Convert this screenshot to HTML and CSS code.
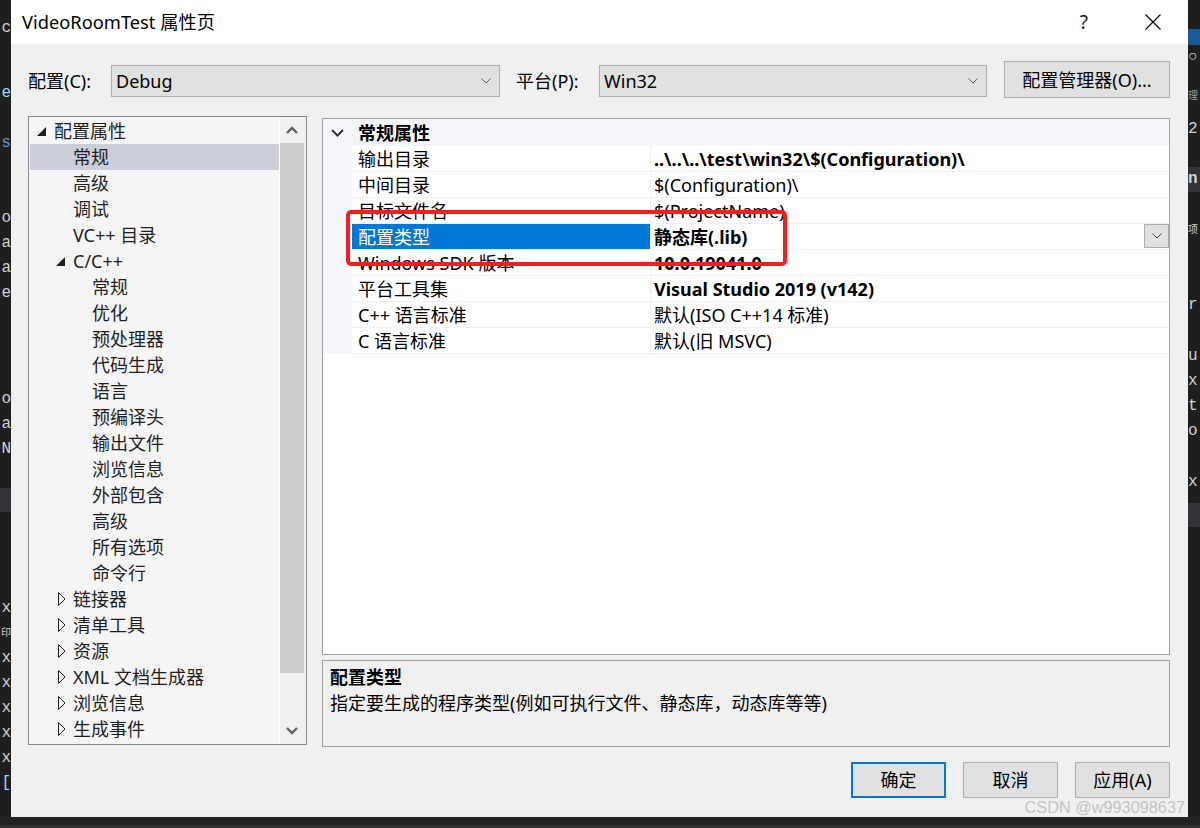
FILE: index.html
```html
<!DOCTYPE html>
<html lang="zh-CN">
<head>
<meta charset="utf-8">
<title>VideoRoomTest 属性页</title>
<link rel="stylesheet" href="styles.css">
</head>
<body>
<div class="desk">
  <div class="strip strip-left">
    <div class="sp16"></div>
    <div class="ln c-w">c</div>
    <div class="sp40"></div>
    <div class="ln c-lb">e</div>
    <div class="sp25"></div>
    <div class="ln c-b">s</div>
    <div class="sp50"></div>
    <div class="ln c-w">o</div>
    <div class="ln c-w">a</div>
    <div class="ln c-w">a</div>
    <div class="ln c-w">e</div>
    <div class="sp81"></div>
    <div class="ln c-w">o</div>
    <div class="ln c-w">a</div>
    <div class="ln c-w">N</div>
    <div class="sp26"></div>
    <div class="band"></div>
    <div class="sp84"></div>
    <div class="ln c-w">x</div>
    <div class="ln c-w sm">印</div>
    <div class="ln c-w">x</div>
    <div class="ln c-w">x</div>
    <div class="ln c-w">x</div>
    <div class="ln c-w">x</div>
    <div class="ln c-w">x</div>
    <div class="ln c-lb">[</div>
  </div>

  <div class="dialog">
    <div class="titlebar">
      <span class="title">VideoRoomTest 属性页</span>
      <span class="help">?</span>
      <svg class="close" width="16" height="16" viewBox="0 0 16 16"><path d="M0.5 0.5 L15.5 15.5 M15.5 0.5 L0.5 15.5" stroke="#000" stroke-width="1.1" fill="none"/></svg>
    </div>

    <div class="content">
      <div class="config-row">
        <span class="lbl">配置(C):</span>
        <div class="select sel-config">
          <span>Debug</span>
          <svg width="10" height="6" viewBox="0 0 10 6"><polyline points="0.5,0.5 5,5 9.5,0.5" stroke="#606060" stroke-width="1" fill="none"/></svg>
        </div>
        <span class="lbl lbl-plat">平台(P):</span>
        <div class="select sel-plat">
          <span>Win32</span>
          <svg width="10" height="6" viewBox="0 0 10 6"><polyline points="0.5,0.5 5,5 9.5,0.5" stroke="#606060" stroke-width="1" fill="none"/></svg>
        </div>
        <button class="btn btn-mgr">配置管理器(O)...</button>
      </div>

      <div class="main">
        <div class="tree">
          <div class="tree-list">
            <div class="row l0"><span class="arw"><svg width="9" height="9" viewBox="0 0 9 9"><polygon points="9,0 9,9 0,9" fill="#1e1e1e"/></svg></span>配置属性</div>
            <div class="row l1 sel"><span class="arw"></span>常规</div>
            <div class="row l1"><span class="arw"></span>高级</div>
            <div class="row l1"><span class="arw"></span>调试</div>
            <div class="row l1"><span class="arw"></span>VC++ 目录</div>
            <div class="row l1"><span class="arw"><svg width="9" height="9" viewBox="0 0 9 9"><polygon points="9,0 9,9 0,9" fill="#1e1e1e"/></svg></span>C/C++</div>
            <div class="row l2"><span class="arw"></span>常规</div>
            <div class="row l2"><span class="arw"></span>优化</div>
            <div class="row l2"><span class="arw"></span>预处理器</div>
            <div class="row l2"><span class="arw"></span>代码生成</div>
            <div class="row l2"><span class="arw"></span>语言</div>
            <div class="row l2"><span class="arw"></span>预编译头</div>
            <div class="row l2"><span class="arw"></span>输出文件</div>
            <div class="row l2"><span class="arw"></span>浏览信息</div>
            <div class="row l2"><span class="arw"></span>外部包含</div>
            <div class="row l2"><span class="arw"></span>高级</div>
            <div class="row l2"><span class="arw"></span>所有选项</div>
            <div class="row l2"><span class="arw"></span>命令行</div>
            <div class="row l1"><span class="arw col"><svg width="8" height="14" viewBox="0 0 8 14"><polygon points="0.5,0.5 7,7 0.5,13.5" fill="none" stroke="#1e1e1e" stroke-width="1"/></svg></span>链接器</div>
            <div class="row l1"><span class="arw col"><svg width="8" height="14" viewBox="0 0 8 14"><polygon points="0.5,0.5 7,7 0.5,13.5" fill="none" stroke="#1e1e1e" stroke-width="1"/></svg></span>清单工具</div>
            <div class="row l1"><span class="arw col"><svg width="8" height="14" viewBox="0 0 8 14"><polygon points="0.5,0.5 7,7 0.5,13.5" fill="none" stroke="#1e1e1e" stroke-width="1"/></svg></span>资源</div>
            <div class="row l1"><span class="arw col"><svg width="8" height="14" viewBox="0 0 8 14"><polygon points="0.5,0.5 7,7 0.5,13.5" fill="none" stroke="#1e1e1e" stroke-width="1"/></svg></span>XML 文档生成器</div>
            <div class="row l1"><span class="arw col"><svg width="8" height="14" viewBox="0 0 8 14"><polygon points="0.5,0.5 7,7 0.5,13.5" fill="none" stroke="#1e1e1e" stroke-width="1"/></svg></span>浏览信息</div>
            <div class="row l1"><span class="arw col"><svg width="8" height="14" viewBox="0 0 8 14"><polygon points="0.5,0.5 7,7 0.5,13.5" fill="none" stroke="#1e1e1e" stroke-width="1"/></svg></span>生成事件</div>
          </div>
          <div class="scrollbar">
            <div class="sb-btn"><svg width="12" height="8" viewBox="0 0 12 8"><polyline points="1,7 6,2 11,7" fill="none" stroke="#606060" stroke-width="2.4"/></svg></div>
            <div class="sb-thumb"></div>
            <div class="sb-track"></div>
            <div class="sb-btn"><svg width="12" height="8" viewBox="0 0 12 8"><polyline points="1,1 6,6 11,1" fill="none" stroke="#606060" stroke-width="2.4"/></svg></div>
          </div>
        </div>

        <div class="right">
          <div class="grid">
            <div class="cat">
              <span class="gut"><svg width="13" height="8" viewBox="0 0 13 8"><polyline points="1,1 6.5,6.5 12,1" fill="none" stroke="#333" stroke-width="2"/></svg></span>
              <span class="cat-name">常规属性</span>
            </div>
            <div class="prow"><span class="gut"></span><span class="pname">输出目录</span><span class="pval b">..\..\..\test\win32\$(Configuration)\</span></div>
            <div class="prow"><span class="gut"></span><span class="pname">中间目录</span><span class="pval">$(Configuration)\</span></div>
            <div class="prow"><span class="gut"></span><span class="pname">目标文件名</span><span class="pval">$(ProjectName)</span></div>
            <div class="prow"><span class="gut"></span><span class="pname psel">配置类型</span><span class="pval b"><span>静态库(.lib)</span><span class="ddbtn"><svg width="10" height="6" viewBox="0 0 10 6"><polyline points="0.5,0.5 5,5 9.5,0.5" fill="none" stroke="#444" stroke-width="1"/></svg></span></span></div>
            <div class="prow"><span class="gut"></span><span class="pname">Windows SDK 版本</span><span class="pval b">10.0.19041.0</span></div>
            <div class="prow"><span class="gut"></span><span class="pname">平台工具集</span><span class="pval b">Visual Studio 2019 (v142)</span></div>
            <div class="prow"><span class="gut"></span><span class="pname">C++ 语言标准</span><span class="pval">默认(ISO C++14 标准)</span></div>
            <div class="prow"><span class="gut"></span><span class="pname">C 语言标准</span><span class="pval">默认(旧 MSVC)</span></div>
            <div class="redbox"></div>
          </div>
          <div class="desc">
            <div class="desc-title">配置类型</div>
            <div class="desc-text">指定要生成的程序类型(例如可执行文件、静态库，动态库等等)</div>
          </div>
        </div>
      </div>

      <div class="buttons">
        <button class="btn btn-dlg btn-default">确定</button>
        <button class="btn btn-dlg">取消</button>
        <button class="btn btn-dlg">应用(A)</button>
      </div>
    </div>
    <div class="watermark">CSDN @w993098637</div>
  </div>

  <div class="strip strip-right">
    <div class="sp25"></div>
    <div class="rband-blue"></div>
    <div class="ln c-w">○</div>
    <div class="sp14"></div>
    <div class="ln c-g sm">理</div>
    <div class="sp8"></div>
    <div class="ln c-w">2</div>
    <div class="sp25"></div>
    <div class="ln c-w bold rband">n</div>
    <div class="sp26"></div>
    <div class="ln c-w sm">项</div>
    <div class="sp50"></div>
    <div class="ln c-w">r</div>
    <div class="sp26"></div>
    <div class="ln c-w">u</div>
    <div class="ln c-w">x</div>
    <div class="ln c-w">t</div>
    <div class="ln c-w">o</div>
    <div class="sp26"></div>
    <div class="ln c-w">x</div>
    <div class="sp8"></div>
    <div class="band"></div>
  </div>
</div>
<div class="bottom-strip"></div>
</body>
</html>
```

FILE: styles.css
```css
* { box-sizing: border-box; }
html, body { margin: 0; padding: 0; }
body {
  width: 1200px;
  height: 828px;
  overflow: hidden;
  background: #1e1e1e;
  font-family: "Noto Sans", "Noto Sans CJK SC", sans-serif;
  font-size: 18px;
  color: #000;
}

.desk { display: flex; height: 817px; }

/* IDE fragments behind the dialog */
.strip { overflow: hidden; background: #1e1e1e; display: flex; flex-direction: column; }
.strip-left { width: 11px; }
.strip-right { width: 12px; }
.strip .ln {
  height: 25px; line-height: 25px; white-space: nowrap; flex: none;
  font-family: "Liberation Mono", "DejaVu Sans Mono", "Noto Sans CJK SC", monospace; font-size: 16px;
  display: flex; align-items: center;
}
.strip-left .ln { justify-content: flex-end; }
.strip .ln.sm { font-size: 10px; }
.strip .bold { font-weight: bold; }
.c-w { color: #d4d4d4; }
.c-g { color: #9a9a9a; }
.c-b { color: #569cd6; }
.c-lb { color: #9cdcfe; }
.band { height: 24px; background: #333337; flex: none; }
.rband { background: #333337; }
.rband-blue { height: 16px; margin-top: 4px; background: #1c5a96; flex: none; }
.sp8 { height: 8px; flex: none; }
.sp14 { height: 14px; flex: none; }
.sp16 { height: 16px; flex: none; }
.sp25 { height: 25px; flex: none; }
.sp26 { height: 26px; flex: none; }
.sp40 { height: 40px; flex: none; }
.sp50 { height: 50px; flex: none; }
.sp81 { height: 81px; flex: none; }
.sp84 { height: 84px; flex: none; }

.bottom-strip { height: 11px; background: linear-gradient(#222 0 8px, #333 8px); }

/* dialog */
.dialog {
  width: 1177px; height: 817px; flex: none;
  background: #f0f0f0;
  display: flex; flex-direction: column;
  position: relative; overflow: hidden;
}
.titlebar {
  height: 44px; flex: none; background: #fff;
  display: flex; align-items: center; padding-left: 11px;
}
.title { font-size: 18.3px; line-height: 24px; }
.help { margin-left: auto; margin-right: 57px; font-size: 19px; line-height: 24px; color: #111; }
.close { margin-right: 27px; }

.content { padding: 0 18px 0 17px; display: flex; flex-direction: column; }

.config-row { margin-top: 17px; height: 37px; display: flex; align-items: flex-end; }
.lbl { width: 83px; height: 32px; line-height: 32px; margin-bottom: 1px; flex: none; }
.lbl-plat { margin-left: 16px; }
.select {
  height: 32px; margin-bottom: 1px; flex: none;
  background: #e1e1e1; border: 1px solid #adadad;
  display: flex; align-items: center; justify-content: space-between;
  padding: 0 8px 0 4px; line-height: 30px;
}
.sel-config { width: 389px; }
.sel-plat { width: 388px; }

.btn {
  font-family: inherit; font-size: 18px; color: #000;
  background: #e1e1e1; border: 1px solid #adadad;
  padding: 0; margin: 0; line-height: 24px;
}
.btn-mgr { width: 166px; height: 37px; margin-left: 17px; }

.main { margin-top: 18px; height: 631px; display: flex; }

/* tree */
.tree {
  width: 279px; height: 629px; flex: none;
  border: 1px solid #828790; background: #f5f5f5;
  display: flex;
}
.tree-list { width: 250px; padding: 1px 0 1px 1px; flex: none; }
.row {
  height: 26px; line-height: 26px; display: flex; align-items: center;
  white-space: nowrap; color: #1e1e1e;
}
.row.sel { background: #cccedb; }
.l0 { padding-left: 7px; }
.l1 { padding-left: 26px; }
.l2 { padding-left: 45px; }
.arw { width: 17px; flex: none; display: flex; align-items: center; height: 26px; }
.arw.col { padding-left: 2px; }

.scrollbar {
  width: 27px; flex: none; border-left: 1px solid #fff;
  background: #f0f0f0; display: flex; flex-direction: column;
}
.sb-btn { height: 26px; display: flex; align-items: center; justify-content: center; padding-right: 2px; flex: none; }
.sb-thumb { height: 530px; width: 24px; background: #cdcdcd; flex: none; }
.sb-track { flex: 1; }

/* right column */
.right { margin-left: 15px; width: 848px; display: flex; flex-direction: column; padding-top: 2px; }
.grid {
  height: 537px; flex: none; position: relative;
  border: 1px solid #a0a0a0; background: #fff;
}
.cat { height: 27px; display: flex; align-items: center; background: #f4f6fb; }
.gut { width: 29px; flex: none; align-self: stretch; display: flex; align-items: center; justify-content: center; background: #f4f6fb; }
.cat .gut { padding-top: 1px; }
.cat-name { font-weight: bold; padding-left: 6px; padding-top: 2px; line-height: 25px; }
.prow { height: 26px; display: flex; }
.pname {
  width: 298px; flex: none; padding: 2px 0 0 6px;
  border-bottom: 1px solid #f0f0f0; line-height: 23px; white-space: nowrap;
}
.pname.psel { background: #0078d7; color: #fff; }
.pval {
  flex: 1; border-left: 1px solid #f0f0f0; border-bottom: 1px solid #f0f0f0;
  padding: 2px 0 0 3px; line-height: 23px; white-space: nowrap;
  display: flex; justify-content: space-between; align-items: flex-start;
}
.pval.b { font-weight: bold; }
.ddbtn {
  width: 25px; height: 24px; margin-top: -2px; background: #e1e1e1; border: 1px solid #adadad;
  display: flex; align-items: center; justify-content: center;
}
.redbox {
  position: absolute; left: 23px; top: 91px; width: 441px; height: 56px;
  border: 4px solid #f41e1e; border-radius: 5px;
}

.desc {
  margin-top: 5px; height: 87px; flex: none;
  border: 1px solid #a0a0a0; background: #f0f0f0;
  padding: 3px 7px;
}
.desc-title { font-weight: bold; line-height: 26px; }
.desc-text { line-height: 26px; }

.buttons { margin-top: 15px; display: flex; justify-content: flex-end; gap: 17px; }
.btn-dlg { width: 95px; height: 36px; }
.btn-default { border: 2px solid #0078d7; }

.watermark {
  position: absolute; top: 799px; right: 3px;
  font-family: "Liberation Sans", sans-serif; font-size: 16.3px; line-height: 17px;
  color: #c3c3c3; white-space: nowrap;
}
```
